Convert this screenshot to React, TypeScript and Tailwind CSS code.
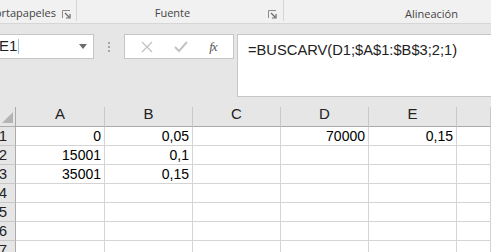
import React from 'react';

const cols = ['A', 'B', 'C', 'D', 'E', ''];
const rows: Record<number, string[]> = {
  1: ['0', '0,05', '', '70000', '0,15', ''],
  2: ['15001', '0,1', '', '', '', ''],
  3: ['35001', '0,15', '', '', '', ''],
  4: ['', '', '', '', '', ''],
  5: ['', '', '', '', '', ''],
  6: ['', '', '', '', '', ''],
  7: ['', '', '', '', '', ''],
};

const Launcher: React.FC = () => (
  <svg width="9" height="9" viewBox="0 0 9 9" className="shrink-0">
    <path d="M0.5 8V0.5H8" fill="none" stroke="#8a8a8a" strokeWidth="1" />
    <path d="M3 3L7 7M4 8H8V4" fill="none" stroke="#6a6a6a" strokeWidth="1.2" />
  </svg>
);

export default function App() {
  return (
    <div className="w-[491px] h-[252px] overflow-hidden bg-[#e6e6e6]" style={{ fontFamily: '"Liberation Sans", Arial, sans-serif' }}>
      {/* ribbon group labels */}
      <div className="h-[24px] flex bg-[#f1f1f1] border-b border-[#d6d6d6] text-[11px] text-[#444]" style={{ fontFamily: '"Open Sans", "Noto Sans", sans-serif' }}>
        <div className="w-[77px] shrink-0 flex items-center justify-end pr-[5px] pt-[6px] border-r border-[#d6d6d6] mb-[2px]">
          <span className="whitespace-nowrap">Portapapeles</span>
          <span className="ml-[6px] mt-[1px]"><Launcher /></span>
        </div>
        <div className="w-[207px] shrink-0 flex items-center pt-[6px] border-r border-[#d6d6d6] mb-[2px]">
          <span className="flex-1 text-center">Fuente</span>
          <span className="mr-[6px] mt-[1px]"><Launcher /></span>
        </div>
        <div className="flex-1 flex items-center justify-center pt-[6px] pl-[88px]">
          <span className="whitespace-nowrap">Alineación</span>
        </div>
      </div>

      {/* formula bar */}
      <div className="h-[83px] flex items-start pt-[10px]">
        <div className="w-[94px] h-[25px] shrink-0 bg-white border border-[#c6c6c6] border-l-0 flex items-center text-[15px] text-[#222]">
          <span className="-ml-[1px]">E1</span>
          <span className="w-[1px] h-[15px] bg-[#9cc3e6] ml-[1px]" />
          <svg width="8" height="5" viewBox="0 0 8 5" className="ml-auto mr-[6px]">
            <path d="M0 0H8L4 5Z" fill="#6b6b6b" />
          </svg>
        </div>
        <div className="w-[30px] h-[25px] shrink-0 flex flex-col items-center justify-center gap-[2px]">
          <span className="w-[2px] h-[2px] bg-[#a6a6a6]" />
          <span className="w-[2px] h-[2px] bg-[#a6a6a6]" />
          <span className="w-[2px] h-[2px] bg-[#a6a6a6]" />
        </div>
        <div className="w-[110px] h-[25px] shrink-0 bg-white border border-[#c6c6c6] flex items-center justify-around px-[6px]">
          <svg width="12" height="12" viewBox="0 0 12 12">
            <path d="M1 1L11 11M11 1L1 11" stroke="#c3c3c3" strokeWidth="1.4" />
          </svg>
          <svg width="14" height="12" viewBox="0 0 14 12">
            <path d="M1 6L5 10L13 1" fill="none" stroke="#c3c3c3" strokeWidth="2" />
          </svg>
          <span className="italic text-[13px] text-[#555] tracking-[-1px]" style={{ fontFamily: '"Liberation Serif", serif' }}>fx</span>
        </div>
        <div className="ml-[3px] flex-1 h-[63px] bg-white border border-[#c6c6c6] border-r-0 pl-[10px] pt-[4px] text-[14.7px] text-[#222] whitespace-nowrap">
          =BUSCARV(D1;$A$1:$B$3;2;1)
        </div>
      </div>

      {/* sheet grid */}
      <div className="grid grid-cols-[16px_89px_88px_88px_88px_88px_1fr] text-[14px] text-black">
        <div className="h-[20px] bg-[#e6e6e6] border-r border-b border-[#ababab] relative">
          <svg width="11" height="11" viewBox="0 0 11 11" className="absolute right-[2px] bottom-[3px]">
            <path d="M11 0V11H0Z" fill="#b4b4b4" />
          </svg>
        </div>
        {cols.map((c, i) => (
          <div key={i} className="h-[20px] bg-[#e6e6e6] border-r border-b border-r-[#c8c8c8] border-b-[#ababab] flex items-end justify-center pb-[1px] text-[15px] text-[#222]">
            {c}
          </div>
        ))}
        {Object.entries(rows).map(([n, vals]) => (
          <React.Fragment key={n}>
            <div className="h-[19px] bg-[#e6e6e6] border-r border-b border-r-[#ababab] border-b-[#c8c8c8] overflow-hidden relative text-[15px] text-[#222]">
              <span className="absolute right-[8px] bottom-[0px] leading-[18px]">{n}</span>
            </div>
            {vals.map((v, i) => (
              <div key={i} className="h-[19px] bg-white border-r border-b border-[#d4d4d4] flex items-end justify-end pr-[3px] leading-[17px]">
                {v}
              </div>
            ))}
          </React.Fragment>
        ))}
      </div>
    </div>
  );
}
